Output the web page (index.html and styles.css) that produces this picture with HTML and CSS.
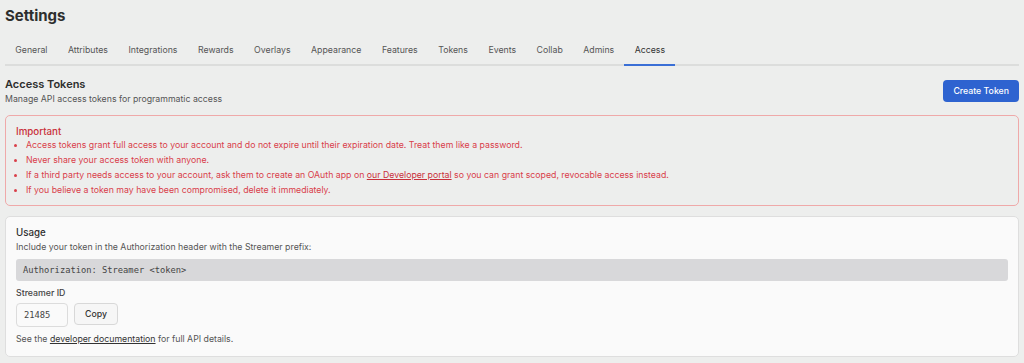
FILE: index.html
```html
<!DOCTYPE html>
<html lang="en">
<head>
    <meta charset="UTF-8">
    <meta name="viewport" content="width=device-width, initial-scale=1.0">
    <title>Settings - Access</title>
    <link rel="stylesheet" href="styles.css">
</head>
<body>

<h1 class="page-title">Settings</h1>

<nav class="tabs">
    <a href="#" class="tab">General</a>
    <a href="#" class="tab">Attributes</a>
    <a href="#" class="tab">Integrations</a>
    <a href="#" class="tab">Rewards</a>
    <a href="#" class="tab">Overlays</a>
    <a href="#" class="tab">Appearance</a>
    <a href="#" class="tab">Features</a>
    <a href="#" class="tab">Tokens</a>
    <a href="#" class="tab">Events</a>
    <a href="#" class="tab">Collab</a>
    <a href="#" class="tab">Admins</a>
    <a href="#" class="tab active">Access</a>
</nav>

<div class="section-header">
    <div>
        <h2 class="section-title">Access Tokens</h2>
        <p class="section-sub">Manage API access tokens for programmatic access</p>
    </div>
    <button class="btn-primary">Create Token</button>
</div>

<div class="alert">
    <h3 class="alert-title">Important</h3>
    <ul class="alert-list">
        <li>Access tokens grant full access to your account and do not expire until their expiration date. Treat them like a password.</li>
        <li>Never share your access token with anyone.</li>
        <li>If a third party needs access to your account, ask them to create an OAuth app on <a href="#">our Developer portal</a> so you can grant scoped, revocable access instead.</li>
        <li>If you believe a token may have been compromised, delete it immediately.</li>
    </ul>
</div>

<div class="card">
    <h3 class="card-title">Usage</h3>
    <p class="card-text">Include your token in the Authorization header with the Streamer prefix:</p>
    <pre class="code">Authorization: Streamer &lt;token&gt;</pre>
    <label class="field-label" for="streamerId">Streamer ID</label>
    <div class="field-row">
        <input type="text" id="streamerId" value="21485" readonly>
        <button class="btn-secondary">Copy</button>
    </div>
    <p class="card-foot">See the <a href="#">developer documentation</a> for full API details.</p>
</div>

</body>
</html>
```

FILE: styles.css
```css
body {
    font-family: 'Inter', 'Noto Sans', sans-serif;
    margin: 0;
    padding: 0 5px;
    background-color: #edeeed;
    color: #333;
    font-size: 8.75px;
}

.page-title {
    margin: 0;
    padding-top: 6px;
    font-size: 15px;
    line-height: 20px;
    font-weight: 700;
    color: #2e2e2e;
}

.tabs {
    display: flex;
    border-bottom: 2px solid #dcdddc;
}

.tab {
    padding: 17px 10.25px 7px;
    line-height: 14px;
    color: #555;
    text-decoration: none;
    border-bottom: 2px solid transparent;
    margin-bottom: -2px;
}

.tab.active {
    color: #333;
    border-bottom-color: #3a6fd6;
}

.section-header {
    display: flex;
    justify-content: space-between;
    align-items: center;
    margin-top: 10px;
}

.section-title {
    margin: 0;
    font-size: 11px;
    line-height: 16px;
    font-weight: 600;
    color: #2e2e2e;
}

.section-sub {
    margin: 0;
    line-height: 14px;
    color: #555;
}

.btn-primary {
    height: 22px;
    padding: 0 10px;
    background-color: #2e63d0;
    color: white;
    border: none;
    border-radius: 4px;
    font-family: inherit;
    font-size: 8.75px;
    font-weight: 500;
    cursor: pointer;
}

.alert {
    margin-top: 9px;
    padding: 10px 10px 7px;
    border: 1px solid #efa9a9;
    border-radius: 5px;
    color: #d9404a;
}

.alert-title {
    margin: 0;
    font-size: 9.75px;
    line-height: 12px;
    font-weight: 500;
    color: #c9303a;
}

.alert-list {
    margin: 0;
    padding-left: 10px;
}

.alert-list li {
    line-height: 15px;
}

.alert-list a {
    color: #c9303a;
}

.card {
    margin-top: 10px;
    padding: 9px 10px 10px;
    background: #fafafa;
    border: 1px solid #dedede;
    border-radius: 5px;
}

.card-title {
    margin: 0;
    font-size: 9.75px;
    line-height: 14px;
    font-weight: 500;
    color: #2e2e2e;
}

.card-text {
    margin: 0;
    line-height: 14px;
    color: #555;
}

.code {
    margin: 5px 0 0;
    height: 22px;
    padding: 0 7px;
    line-height: 22px;
    background: #d8d8da;
    border-radius: 3px;
    font-family: 'DejaVu Sans Mono', monospace;
    font-size: 8.75px;
    color: #444;
}

.field-label {
    display: block;
    margin-top: 5px;
    line-height: 14px;
    font-weight: 500;
    color: #444;
}

.field-row {
    display: flex;
    align-items: flex-start;
    gap: 6px;
    margin-top: 3px;
}

input[type="text"] {
    box-sizing: border-box;
    width: 52px;
    height: 24px;
    padding: 0 7px;
    border: 1px solid #dcdcdc;
    border-radius: 4px;
    background: #fafafa;
    font-family: 'DejaVu Sans Mono', monospace;
    font-size: 8.75px;
    color: #444;
}

.btn-secondary {
    height: 22px;
    padding: 0 10px;
    background: #f6f6f6;
    border: 1px solid #d8d8d8;
    border-radius: 4px;
    font-family: inherit;
    font-size: 8.75px;
    font-weight: 500;
    color: #333;
    cursor: pointer;
}

.card-foot {
    margin: 5px 0 0;
    line-height: 14px;
    color: #555;
}

.card-foot a {
    color: #333;
}
```
